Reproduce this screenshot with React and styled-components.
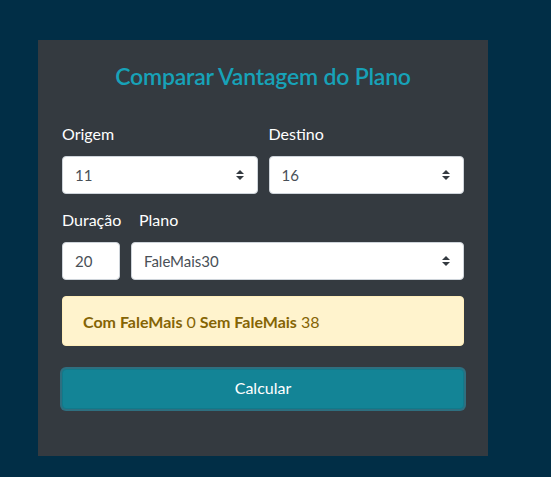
import React, { useState } from "react";
import styled, { createGlobalStyle } from "styled-components";

const Global = createGlobalStyle`
  html, body {
    margin: 0;
    padding: 0;
    background: #012e46;
    font-family: Lato, "Open Sans", sans-serif;
  }
  * { box-sizing: border-box; }
`;

const Page = styled.div`
  width: 551px;
  height: 477px;
  padding: 40px 0 0 38px;
`;

const Card = styled.form`
  width: 450px;
  height: 416px;
  background: #343a40;
  padding: 21px 24px 0;
  display: flex;
  flex-direction: column;
`;

const Title = styled.h2`
  margin: 0;
  text-align: center;
  color: #17a2b8;
  font-size: 23px;
  font-weight: 600;
  line-height: 30px;
  letter-spacing: -0.2px;
`;

const Row = styled.div`
  display: flex;
  gap: 11px;
  margin-top: ${(p) => p.top}px;
`;

const Field = styled.div`
  display: flex;
  flex-direction: column;
  flex: ${(p) => (p.fixed ? `0 0 ${p.fixed}px` : "1 1 0")};
  min-width: 0;
`;

const Label = styled.label`
  color: #fff;
  font-size: 16px;
  line-height: 24px;
  margin-bottom: 10px;
  padding-left: ${(p) => p.indent || 0}px;
  white-space: nowrap;
`;

const arrows =
  "url(\"data:image/svg+xml,%3csvg xmlns='http://www.w3.org/2000/svg' width='8' height='10' viewBox='0 0 8 10'%3e%3cpath fill='%23343a40' d='M4 0 0 4h8zM4 10 0 6h8z'/%3e%3c/svg%3e\")";

const Select = styled.select`
  appearance: none;
  height: 38px;
  width: 100%;
  border: 1px solid #ced4da;
  border-radius: 4px;
  background: #fff ${arrows} no-repeat right 13px center / 8px 10px;
  padding: 0 28px 0 12px;
  font-family: inherit;
  font-size: 15px;
  color: #495057;
  outline: none;
`;

const Input = styled.input`
  height: 38px;
  width: 100%;
  border: 1px solid #ced4da;
  border-radius: 4px;
  background: #fff;
  padding: 0 12px;
  font-family: inherit;
  font-size: 15px;
  color: #495057;
  outline: none;
`;

const Alert = styled.div`
  margin-top: 16px;
  height: 50px;
  background: #fff3cd;
  border: 1px solid #ffeeba;
  border-radius: 4px;
  color: #856404;
  font-size: 16px;
  font-weight: 400;
  display: flex;
  align-items: center;
  padding: 0 20px;
  gap: 4px;
  b { font-weight: 700; }
`;

const Button = styled.button`
  margin-top: 23px;
  height: 40px;
  width: 100%;
  background: #138496;
  color: #fff;
  border: 1px solid #117a8b;
  border-radius: 4px;
  box-shadow: 0 0 0 2px #2e6f80;
  font-family: inherit;
  font-size: 16px;
  line-height: 36px;
  padding: 0 0 2px;
  cursor: pointer;
`;

export default function App() {
  const [origem, setOrigem] = useState("11");
  const [destino, setDestino] = useState("16");
  const [duracao, setDuracao] = useState("20");
  const [plano, setPlano] = useState("FaleMais30");

  return (
    <Page>
      <Global />
      <Card onSubmit={(e) => e.preventDefault()}>
        <Title>Comparar Vantagem do Plano</Title>
        <Row top={31}>
          <Field>
            <Label>Origem</Label>
            <Select value={origem} onChange={(e) => setOrigem(e.target.value)}>
              {["11", "16", "17", "18"].map((v) => (
                <option key={v}>{v}</option>
              ))}
            </Select>
          </Field>
          <Field>
            <Label>Destino</Label>
            <Select value={destino} onChange={(e) => setDestino(e.target.value)}>
              {["11", "16", "17", "18"].map((v) => (
                <option key={v}>{v}</option>
              ))}
            </Select>
          </Field>
        </Row>
        <Row top={14}>
          <Field fixed={58}>
            <Label>Duração</Label>
            <Input value={duracao} onChange={(e) => setDuracao(e.target.value)} />
          </Field>
          <Field>
            <Label indent={8}>Plano</Label>
            <Select value={plano} onChange={(e) => setPlano(e.target.value)}>
              {["FaleMais30", "FaleMais60", "FaleMais120"].map((v) => (
                <option key={v}>{v}</option>
              ))}
            </Select>
          </Field>
        </Row>
        <Alert>
          <b>Com FaleMais</b> 0 <b>Sem FaleMais</b> 38
        </Alert>
        <Button type="submit">Calcular</Button>
      </Card>
    </Page>
  );
}
